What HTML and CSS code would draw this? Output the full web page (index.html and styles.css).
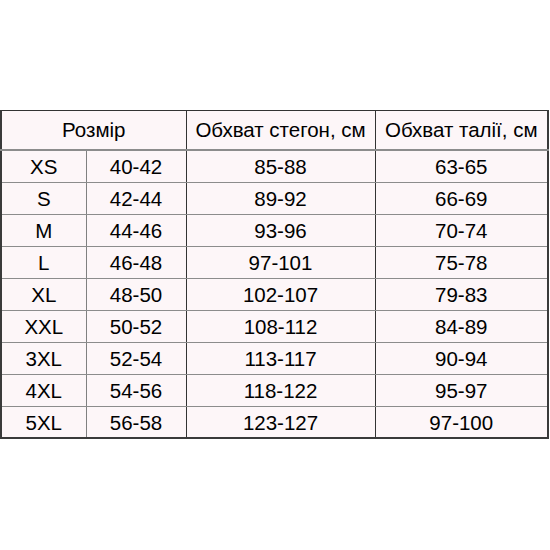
FILE: index.html
```html
<!DOCTYPE html>
<html lang="uk">
<head>
<meta charset="utf-8">
<link rel="stylesheet" href="styles.css">
</head>
<body>
<table class="sizes">
  <colgroup>
    <col class="c1"><col class="c2"><col class="c3"><col class="c4">
  </colgroup>
  <thead>
    <tr class="head">
      <th colspan="2">Розмір</th>
      <th class="dark">Обхват стегон, см</th>
      <th class="dark">Обхват талії, см</th>
    </tr>
  </thead>
  <tbody>
    <tr><td>XS</td><td class="lite">40-42</td><td class="dark">85-88</td><td class="dark">63-65</td></tr>
    <tr><td>S</td><td class="lite">42-44</td><td class="dark">89-92</td><td class="dark">66-69</td></tr>
    <tr><td>M</td><td class="lite">44-46</td><td class="dark">93-96</td><td class="dark">70-74</td></tr>
    <tr><td>L</td><td class="lite">46-48</td><td class="dark">97-101</td><td class="dark">75-78</td></tr>
    <tr><td>XL</td><td class="lite">48-50</td><td class="dark">102-107</td><td class="dark">79-83</td></tr>
    <tr><td>XXL</td><td class="lite">50-52</td><td class="dark">108-112</td><td class="dark">84-89</td></tr>
    <tr><td>3XL</td><td class="lite">52-54</td><td class="dark">113-117</td><td class="dark">90-94</td></tr>
    <tr><td>4XL</td><td class="lite">54-56</td><td class="dark">118-122</td><td class="dark">95-97</td></tr>
    <tr><td>5XL</td><td class="lite">56-58</td><td class="dark">123-127</td><td class="dark">97-100</td></tr>
  </tbody>
</table>
</body>
</html>
```
FILE: styles.css
```css
html, body {
  margin: 0;
  padding: 0;
  background: #ffffff;
}
body {
  padding-top: 110px;
  font-family: "Liberation Sans", Arial, sans-serif;
  color: #000;
}
.sizes {
  width: 549px;
  border-collapse: collapse;
  table-layout: fixed;
  background: #fdf6f8;
  border-top: 1px solid #333;
  border-left: 2px solid #3a3a3a;
  border-right: 2px solid #3a3a3a;
  border-bottom: 2px solid #3a3a3a;
}
.c1 { width: 85px; }
.c2 { width: 100px; }
.c3 { width: 189px; }
.c4 { width: 173px; }
.sizes th, .sizes td {
  padding: 0;
  text-align: center;
  font-weight: normal;
  font-size: 20.5px;
  border-top: 1px solid #8c8c8c;
  border-bottom: 1px solid #8c8c8c;
}
.sizes .head th {
  height: 38px;
  line-height: 22px;
  border-top: none;
  border-bottom: 2px solid #8c8c8c;
}
.sizes td {
  height: 32px;
  box-sizing: border-box;
  padding-top: 2px;
  line-height: 22px;
}
.sizes .lite {
  border-left: 1px solid #808080;
}
.sizes .dark {
  border-left: 1px solid #333;
}
```
